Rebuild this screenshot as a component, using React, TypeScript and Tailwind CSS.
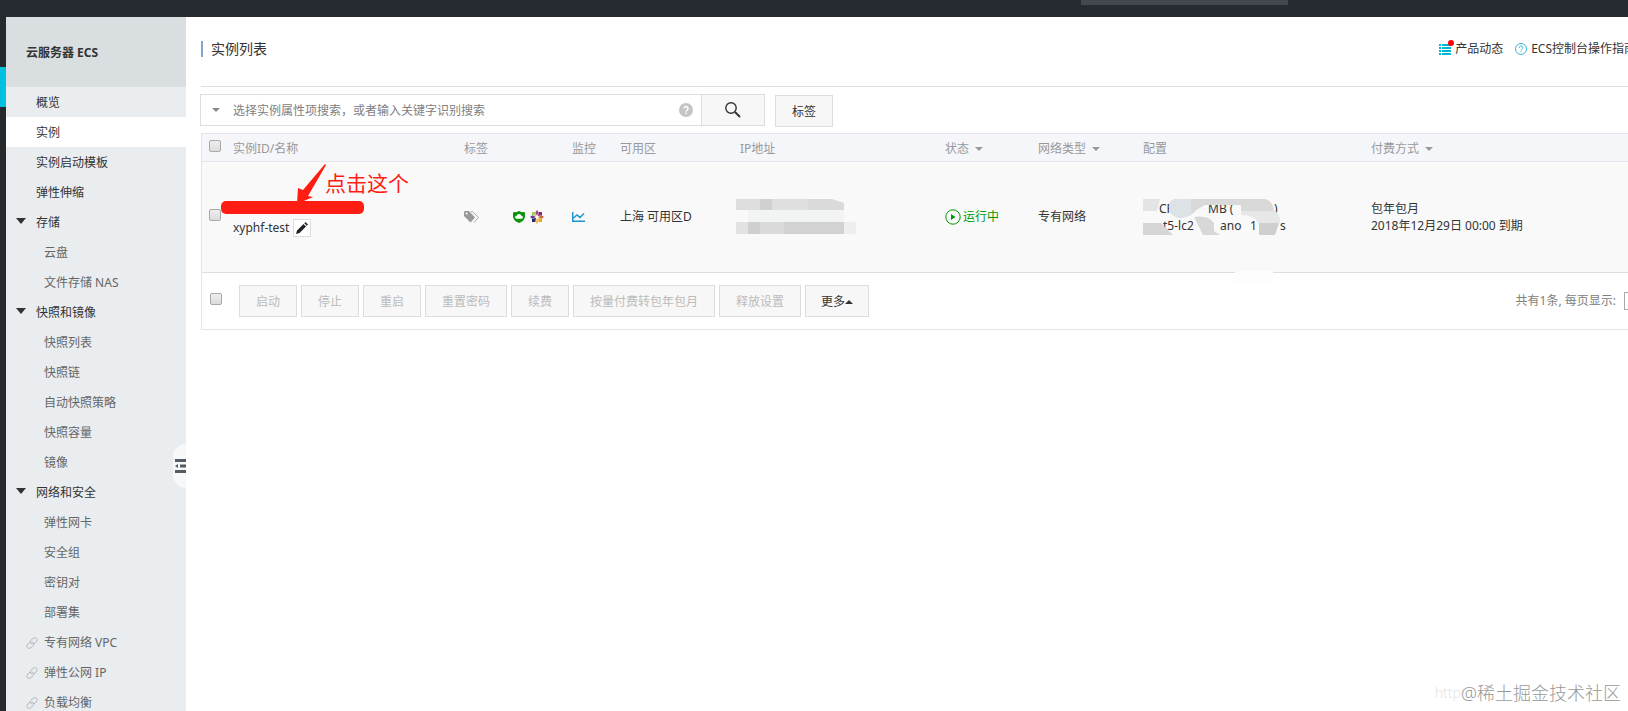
import clsx from "clsx";
import React from "react";

type NavItem = {
  label: string;
  kind: "top" | "group" | "sub" | "link";
  active?: boolean;
};

const navItems: NavItem[] = [
  { label: "概览", kind: "top" },
  { label: "实例", kind: "top", active: true },
  { label: "实例启动模板", kind: "top" },
  { label: "弹性伸缩", kind: "top" },
  { label: "存储", kind: "group" },
  { label: "云盘", kind: "sub" },
  { label: "文件存储 NAS", kind: "sub" },
  { label: "快照和镜像", kind: "group" },
  { label: "快照列表", kind: "sub" },
  { label: "快照链", kind: "sub" },
  { label: "自动快照策略", kind: "sub" },
  { label: "快照容量", kind: "sub" },
  { label: "镜像", kind: "sub" },
  { label: "网络和安全", kind: "group" },
  { label: "弹性网卡", kind: "sub" },
  { label: "安全组", kind: "sub" },
  { label: "密钥对", kind: "sub" },
  { label: "部署集", kind: "sub" },
  { label: "专有网络 VPC", kind: "link" },
  { label: "弹性公网 IP", kind: "link" },
  { label: "负载均衡", kind: "link" },
];

const batchActions = [
  "启动",
  "停止",
  "重启",
  "重置密码",
  "续费",
  "按量付费转包年包月",
  "释放设置",
];

function Triangle({ up = false }: { up?: boolean }) {
  return (
    <svg viewBox="0 0 8 4" className="h-1 w-2 shrink-0" fill="currentColor" aria-hidden="true">
      <path d={up ? "M0 4 4 0l4 4z" : "M0 0h8L4 4z"} />
    </svg>
  );
}

function ChainIcon() {
  return (
    <svg viewBox="0 0 12 12" className="size-3" fill="none" stroke="#b4b8ba" strokeLinecap="round" aria-hidden="true">
      <path d="M5.300 6.800 4.500 4.800q-.3-1 .6-1.800L7.900.9q1.400-.8 2.600.4t.4 2.600L9.100 6.200q-1 1-2.200.2" />
      <path d="M6.700 5.200 7.500 7.200q.3 1-.6 1.800l-2.800 2.100q-1.400.8-2.600-.4T1.100 8.100L2.900 5.800q1-1 2.200-.2" />
    </svg>
  );
}

function Checkbox({ label }: { label: string }) {
  return (
    <input
      type="checkbox"
      aria-label={label}
      className="block size-3 appearance-none rounded-[2px] border border-[#a9a9a9] bg-linear-to-b from-[#eeeeee] to-[#dcdcdc]"
    />
  );
}

function Sidebar() {
  return (
    <aside className="relative w-[180px] shrink-0 bg-[#e9edf0]">
      <h2 className="flex h-[70px] items-center bg-[#d9dee1] pt-[2px] pl-5 text-xs font-bold">云服务器 ECS</h2>
      <nav>
        {navItems.map((item) => (
          <a
            key={item.label}
            href="#"
            className={clsx(
              "flex h-[30px] items-center pt-[2px]",
              item.active && "bg-white",
              (item.kind === "sub" || item.kind === "link") && "text-[#666]"
            )}
          >
            <span
              className={clsx(
                "flex shrink-0 items-center",
                item.kind === "link" ? "w-[38px] pl-5" : item.kind === "sub" ? "w-[38px]" : "w-[30px] pl-[10px]"
              )}
            >
              {item.kind === "group" && (
                <svg viewBox="0 0 10 6" className="mb-1 h-[6px] w-[10px]" fill="#333" aria-hidden="true">
                  <path d="M0 0h10L5 6z" />
                </svg>
              )}
              {item.kind === "link" && <ChainIcon />}
            </span>
            {item.label}
          </a>
        ))}
      </nav>
      <button
        type="button"
        aria-label="收起菜单"
        className="absolute top-[427px] right-0 flex h-[44px] w-[13px] items-center justify-end rounded-l-[13px] bg-[#f7f8f9]"
      >
        <svg viewBox="0 0 11 14" className="h-[14px] w-[11px]" fill="#545b62" aria-hidden="true">
          <path d="M0 0h11v3H0zM5 5.500h6v3H5zM0 11h11v3H0zM0 7l3-2v4z" />
        </svg>
      </button>
    </aside>
  );
}

function PageHeader() {
  return (
    <header className="ml-px flex h-[70px] items-center justify-between border-b border-[#ddd] pb-[5px]">
      <h1 className="border-l-2 border-[#88a4cc] pl-2 text-sm leading-4">实例列表</h1>
      <div className="-mr-2 flex items-center gap-3 whitespace-nowrap">
        <a href="#" className="flex items-center gap-1">
          <span className="relative">
            <svg viewBox="0 0 12 11" className="h-[11px] w-3" fill="#00b7d3" aria-hidden="true">
              <path d="M0 0h2v2H0zM3 0h9v2H3zM0 3h2v2H0zM3 3h9v2H3zM0 6h2v2H0zM3 6h9v2H3zM0 9h2v2H0zM3 9h9v2H3z" />
            </svg>
            <i className="absolute -top-1 -right-[3px] size-[6px] rounded-full bg-[#f00]" />
          </span>
          产品动态
        </a>
        <a href="#" className="flex items-center gap-1">
          <svg viewBox="0 0 12 12" className="size-3" fill="none" stroke="#3cb4d4" aria-hidden="true">
            <circle cx="6" cy="6" r="5.500" />
            <path d="M4.300 4.800a1.700 1.700 0 1 1 2.500 1.400q-.8.500-.8 1.300M6 8.500v1" />
          </svg>
          ECS控制台操作指南
        </a>
      </div>
    </header>
  );
}

function SearchBar() {
  return (
    <form className="mt-[7px] flex items-start">
      <div className="flex h-8 w-[502px] items-center border border-[#ddd] bg-white">
        <button type="button" aria-label="选择属性" className="flex w-8 justify-center pr-[2px] text-[#888]">
          <Triangle />
        </button>
        <input
          type="text"
          aria-label="搜索实例"
          placeholder="选择实例属性项搜索，或者输入关键字识别搜索"
          className="min-w-0 flex-1 pt-[2px] outline-none placeholder:text-[#808080]"
        />
        <svg viewBox="0 0 14 14" className="mr-2 size-[14px]" fill="none" aria-hidden="true">
          <circle cx="7" cy="7" r="7" fill="#c4c4c4" />
          <path d="M5 5.600a2 2 0 1 1 3 1.700q-1 .5-1 1.200M7 9.600v1.600" stroke="#fff" strokeWidth="1.500" />
        </svg>
      </div>
      <button
        type="submit"
        aria-label="搜索"
        className="-ml-px flex h-8 w-16 items-center justify-center border border-[#ddd] bg-[#f7f7f7]"
      >
        <svg viewBox="0 0 16 16" className="size-4" fill="none" stroke="#333" aria-hidden="true">
          <circle cx="6" cy="6" r="5.200" strokeWidth="1.400" />
          <path d="m10 10 5 5" strokeWidth="2" />
        </svg>
      </button>
      <button type="button" className="mt-px ml-[10px] h-8 w-[58px] border border-[#ddd] bg-[#f7f7f7] pt-[2px]">
        标签
      </button>
    </form>
  );
}

function ShieldIcon() {
  return (
    <svg viewBox="0 0 12 12" className="size-3" aria-hidden="true">
      <path d="M6 0q2.500 1.500 6 1.200V5q0 5-6 7Q0 10 0 5V1.200Q3.500 1.500 6 0z" fill="#0a940a" />
      <path d="M3.600 7.800a1.500 1.500 0 0 1 0-3 2.500 2.500 0 0 1 4.800 0 1.500 1.500 0 0 1 0 3z" fill="#fff" />
    </svg>
  );
}

function CentosIcon() {
  return (
    <svg viewBox="0 0 14 14" className="size-[14px]" aria-hidden="true">
      <path d="m7 0 1.700 2.300L7 6 5.300 2.300z" fill="#9c4a8c" />
      <path d="m14 7-2.300 1.700L8 7l3.700-1.700z" fill="#c7643c" />
      <path d="m7 14-1.700-2.300L7 8l1.700 3.700z" fill="#f0c04a" />
      <path d="m0 7 2.300-1.700L6 7 2.300 8.700z" fill="#6a3c8c" />
      <path d="M2 2h3.200l1 3.800L2 5z" fill="#a4cf4c" />
      <path d="M12 2v3.200L8 6l.8-4z" fill="#932279" />
      <path d="M12 12H8.800L8 8l4 .8z" fill="#efa724" />
      <path d="M2 12V8.800L6 8l-.8 4z" fill="#262577" />
    </svg>
  );
}

function TagsIcon() {
  return (
    <svg viewBox="0 0 16 12" className="h-3 w-4" aria-hidden="true">
      <path d="M0 1.200Q0 0 1.200 0H5l6 6.500-4.500 5L0 5z" fill="#999" />
      <path d="M7 .5h1.200L14.500 6.300 10 11.500" fill="none" stroke="#aaa" />
      <circle cx="2.600" cy="2.600" r="1" fill="#fff" />
    </svg>
  );
}

function Annotation() {
  return (
    <div className="pointer-events-none absolute -top-[43px] -left-3 w-[200px] text-[#ff1c12]">
      <svg viewBox="0 0 144 54" className="h-[54px] w-36" fill="currentColor" aria-hidden="true">
        <path d="M104 1 82 27l-5-2-1 16 16-7-5-1L105 2z" />
        <rect x="0" y="38" width="143" height="13" rx="5" />
      </svg>
      <span className="absolute top-[6px] left-[104px] text-[21px] leading-7">点击这个</span>
    </div>
  );
}

function IpMosaic() {
  return (
    <svg viewBox="0 0 120 36" className="h-9 w-[120px]" aria-hidden="true">
      <path d="M0 0h24v11H0z" fill="#dedede" />
      <path d="M24 0h12v11H24z" fill="#d0d0d0" />
      <path d="M36 0h36v11H36z" fill="#dfdfdf" />
      <path d="M72 0h24l12 4v7H72z" fill="#dadada" />
      <path d="M12 11h96v12H12z" fill="#f2f3f3" />
      <path d="M0 23h12v12H0z" fill="#e2e2e2" />
      <path d="M12 23h12v12H12z" fill="#cfcfcf" />
      <path d="M24 23h24v12H24z" fill="#dadada" />
      <path d="M48 23h60v12H48z" fill="#d2d2d2" />
      <path d="M108 23h12v12h-12z" fill="#eee" />
    </svg>
  );
}

function ConfigCell() {
  return (
    <div className="relative h-9 leading-[17px]">
      <div className="flex pt-px pl-4">
        <span className="w-[49px]">CP</span>
        <span className="w-[66px]">MB (</span>
        <span>)</span>
      </div>
      <div className="flex pl-5">
        <span className="w-[57px]">t5-lc2</span>
        <span className="w-[30px]">ano</span>
        <span className="w-[30px]">1</span>
        <span>s</span>
      </div>
      <svg viewBox="0 0 144 88" className="absolute top-0 left-0 h-[88px] w-36" aria-hidden="true">
        <path d="M0 0h17l-3 12H0z" fill="#e4e4e4" />
        <path d="M26 5q2-5 8-5h88q8 2 9 12H98V6H62q-8 4-14 10-14 6-22-4z" fill="#d9d9d9" />
        <path d="M26 5q2-5 8-5h14v16q-14 8-22-4z" fill="#dce2e6" />
        <path d="M98 12h34q6 4 5 12h-22q-3-8-17-8z" fill="#e7e7e7" />
        <path d="M0 24h18l12 12H0z" fill="#d6d6d6" />
        <path d="M51 18q14-2 20 6v8l6 4H60z" fill="#d8d8d8" />
        <path d="M116 24h20l-4 12h-16z" fill="#cfcfcf" />
        <path d="M92 72h38v12H92z" fill="#fdfdfd" />
      </svg>
    </div>
  );
}

function InstanceTable() {
  return (
    <table className="w-full min-w-[1427px] table-fixed border-collapse text-left">
      <colgroup>
        <col className="w-[31px]" />
        <col className="w-[231px]" />
        <col className="w-[49px]" />
        <col className="w-[59px]" />
        <col className="w-[48px]" />
        <col className="w-[116px]" />
        <col className="w-[209px]" />
        <col className="w-[93px]" />
        <col className="w-[105px]" />
        <col className="w-[228px]" />
        <col />
      </colgroup>
      <thead>
        <tr className="h-[28px] border-y border-[#e1e6eb] bg-[#f5f6fa] text-[#999] *:pt-[2px] *:font-normal">
          <th>
            <div className="pb-[5px] pl-[7px]">
              <Checkbox label="全选" />
            </div>
          </th>
          <th>实例ID/名称</th>
          <th>标签</th>
          <th />
          <th>监控</th>
          <th>可用区</th>
          <th>
            <span className="pl-1">IP地址</span>
          </th>
          <th>
            <span className="flex items-center gap-[6px]">
              状态 <Triangle />
            </span>
          </th>
          <th>
            <span className="flex items-center gap-[6px]">
              网络类型 <Triangle />
            </span>
          </th>
          <th>配置</th>
          <th>
            <span className="flex items-center gap-[6px]">
              付费方式 <Triangle />
            </span>
          </th>
        </tr>
      </thead>
      <tbody>
        <tr className="h-[111px] border-b border-[#ddd] bg-[#f9f9f9]">
          <td className="pb-1 pl-[7px]">
            <Checkbox label="选择 xyphf-test" />
          </td>
          <td>
            <div className="relative flex h-[18px] items-center gap-1 pt-[22px]">
              xyphf-test
              <button
                type="button"
                aria-label="编辑名称"
                className="flex size-[18px] shrink-0 items-center justify-center border border-[#ddd] bg-white"
              >
                <svg viewBox="0 0 12 12" className="size-3" fill="#222" aria-hidden="true">
                  <path d="m0 12 1-3.500L7.500 2 10 4.500 3.500 11zM8.300 1.200 9.500 0 12 2.500l-1.200 1.200z" />
                </svg>
              </button>
              <Annotation />
            </div>
          </td>
          <td>
            <TagsIcon />
          </td>
          <td>
            <div className="flex items-center gap-[5px]">
              <ShieldIcon />
              <CentosIcon />
            </div>
          </td>
          <td>
            <svg viewBox="0 0 13 10" className="h-[10px] w-[13px]" fill="none" stroke="#1f93cf" strokeWidth="1.500" aria-hidden="true">
              <path d="M.7 0v9.300H13M1.500 6 5 3l3 2.500 4-4" />
            </svg>
          </td>
          <td>上海 可用区D</td>
          <td>
            <IpMosaic />
          </td>
          <td>
            <span className="flex items-center gap-[2px] text-[#090]">
              <svg viewBox="0 0 16 16" className="size-4" aria-hidden="true">
                <circle cx="8" cy="8" r="7.200" fill="none" stroke="currentColor" />
                <path d="M6 5v6l4.500-3z" fill="currentColor" />
              </svg>
              运行中
            </span>
          </td>
          <td>专有网络</td>
          <td>
            <ConfigCell />
          </td>
          <td className="leading-[17px]">
            包年包月
            <br />
            2018年12月29日 00:00 到期
          </td>
        </tr>
      </tbody>
    </table>
  );
}

function TableFooter() {
  return (
    <div className="flex h-[57px] items-center justify-between border-b border-[#e1e6eb] pl-2 whitespace-nowrap">
      <div className="flex items-center gap-1">
        <div className="mb-1 w-[25px]">
          <Checkbox label="选择本页" />
        </div>
        {batchActions.map((action) => (
          <button
            key={action}
            type="button"
            disabled
            className="h-8 border border-[#ddd] bg-[#f7f7f7] px-4 pt-[2px] text-[#bbb]"
          >
            {action}
          </button>
        ))}
        <button type="button" className="flex h-8 items-center border border-[#ddd] bg-[#f7f7f7] px-[15px] pt-[2px]">
          更多
          <Triangle up />
        </button>
      </div>
      <div className="-mr-9 flex items-center gap-2 text-[#808080]">
        <label htmlFor="page-size">共有1条, 每页显示:</label>
        <select id="page-size" className="h-[18px] w-10 appearance-none border border-[#aaa] pl-2">
          <option>20</option>
        </select>
      </div>
    </div>
  );
}

export default function App() {
  return (
    <div className="relative flex min-h-screen flex-col overflow-hidden bg-white font-['Noto_Sans','Noto_Sans_CJK_SC',sans-serif] text-xs text-[#333]">
      <div className="flex h-[17px] items-start justify-end bg-[#262a31] pr-[340px]">
        <div className="h-[5px] w-[207px] bg-[#43474f]" />
      </div>
      <div className="flex flex-1">
        <div className="w-[6px] shrink-0 bg-[#262a2e] pt-[50px]">
          <div className="h-10 bg-[#00c1de]" />
        </div>
        <Sidebar />
        <main className="min-w-0 flex-1 pl-[14px]">
          <PageHeader />
          <SearchBar />
          <div className="mt-[6px] ml-px border-l border-[#e1e6eb]">
            <InstanceTable />
            <TableFooter />
          </div>
        </main>
      </div>
      <div className="absolute right-[7px] bottom-3 flex items-center text-lg leading-6 font-light text-[#999]">
        <span className="text-sm text-[#e4e4e4]">http</span>
        @稀土掘金技术社区
      </div>
    </div>
  );
}
